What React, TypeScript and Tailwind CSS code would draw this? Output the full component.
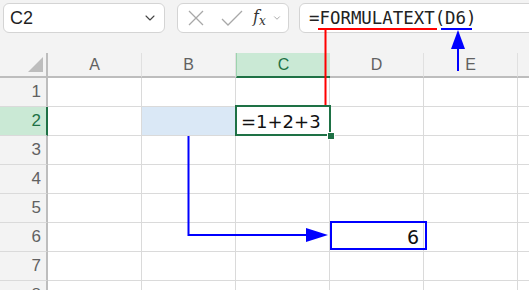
import { ChevronDown } from "lucide-react";

const cols = ["A", "B", "C", "D", "E", ""];
const rows = [1, 2, 3, 4, 5, 6, 7, 8];

function cellContent(col: string, row: number) {
  if (col === "C" && row === 2) {
    return <span className="pl-[5px] text-[18px] text-[#111]">=1+2+3</span>;
  }
  if (col === "D" && row === 6) {
    return <span className="ml-auto pr-[4px] text-[19px] text-[#111]">6</span>;
  }
  return null;
}

export default function App() {
  return (
    <div className="relative w-[529px] h-[290px] overflow-hidden bg-[#f3f3f3] font-['Liberation_Sans',sans-serif]">
      {/* toolbar */}
      <div className="flex h-[53px] items-start pt-[3px] pl-[3px] gap-[12px]">
        <div className="flex h-[30px] w-[162px] shrink-0 items-center rounded-[6px] border border-[#d4d4d4] bg-white pl-[6px] pr-[6px]">
          <span className="text-[18px] text-[#1f1f1f]">C2</span>
          <ChevronDown className="ml-auto text-[#444]" size={16} strokeWidth={1.6} />
        </div>
        <div className="flex h-[30px] w-[112px] shrink-0 items-center rounded-[6px] border border-[#d4d4d4] bg-white pl-[10px]">
          <svg width="16" height="16" viewBox="0 0 16 16" className="text-[#a8a8a8]">
            <path d="M1 1 L15 15 M15 1 L1 15" stroke="currentColor" strokeWidth="1.3" fill="none" />
          </svg>
          <svg width="22" height="16" viewBox="0 0 22 16" className="ml-[17px] text-[#a8a8a8]">
            <path d="M1 9 L7 15 L21 1" stroke="currentColor" strokeWidth="1.3" fill="none" />
          </svg>
          <span className="ml-[10px] font-['DejaVu_Serif',serif] italic text-[16px] text-[#333] leading-none">
            f<span className="text-[12px] align-[-3px]">x</span>
          </span>
          <ChevronDown className="ml-[6px] text-[#999]" size={10} strokeWidth={2} />
        </div>
        <div className="flex h-[30px] w-[260px] shrink-0 items-center rounded-[6px] border border-[#d4d4d4] bg-white pl-[9px] -ml-[2px]">
          <span className="font-['DejaVu_Sans_Mono',monospace] text-[17.4px] text-[#222]">=FORMULATEXT(D6)</span>
        </div>
      </div>

      {/* column headers */}
      <div className="flex h-[25px]">
        <div className="relative w-[48px] shrink-0 border-r-2 border-b-2 border-[#bdbdbd]">
          <svg width="16" height="16" viewBox="0 0 16 16" className="absolute right-[2px] bottom-[3px]">
            <polygon points="15,0 15,15 0,15" fill="#bdbdbd" />
          </svg>
        </div>
        {cols.map((c, i) =>
          c === "C" ? (
            <div
              key={i}
              className="flex w-[94px] shrink-0 items-center justify-center border-b-2 border-l border-[#1e7145] border-l-[#9dd3ae] bg-[#cae9d5] text-[16px] text-[#1e7145]"
            >
              {c}
            </div>
          ) : (
            <div
              key={i}
              className="flex w-[94px] shrink-0 items-center justify-center border-b-2 border-r border-[#bdbdbd] border-r-[#e0e0e0] text-[16px] text-[#616161]"
            >
              {c}
            </div>
          )
        )}
      </div>

      {/* rows */}
      {rows.map((r) => (
        <div key={r} className="flex h-[29px]">
          <div
            className={
              r === 2
                ? "flex w-[48px] shrink-0 items-center justify-end border-r-2 border-b border-[#1e7145] border-b-[#dadada] bg-[#cae9d5] pr-[5px] text-[17px] text-[#1e7145]"
                : "flex w-[48px] shrink-0 items-center justify-end border-r-2 border-b border-[#bdbdbd] border-b-[#dadada] pr-[5px] text-[17px] text-[#616161]"
            }
          >
            {r}
          </div>
          {cols.map((c, i) => (
            <div
              key={i}
              className={
                "flex w-[94px] shrink-0 items-center border-r border-b border-[#dadada] font-['DejaVu_Sans',sans-serif] " +
                (c === "B" && r === 2 ? "bg-[#dae8f6]" : "bg-white")
              }
            >
              {cellContent(c, r)}
            </div>
          ))}
        </div>
      ))}

      {/* active cell C2 */}
      <div className="absolute left-[235px] top-[105px] h-[31px] w-[96px] border-2 border-[#1e7145]" />
      <div className="absolute left-[328px] top-[133px] h-[6px] w-[6px] bg-[#1e7145] outline outline-1 outline-white" />

      {/* referenced cell D6 */}
      <div className="absolute left-[330px] top-[221px] h-[29px] w-[97px] border-2 border-[#0000ff]" />

      {/* annotation arrows */}
      <svg className="pointer-events-none absolute left-0 top-0" width="529" height="290" viewBox="0 0 529 290">
        <path d="M318 29 H437 M325.5 29 V105" stroke="#ff0000" strokeWidth="2" fill="none" />
        <path d="M441 29 H472" stroke="#0000ff" strokeWidth="2" fill="none" />
        <path d="M458 71 V46" stroke="#0000ff" strokeWidth="2" fill="none" />
        <polygon points="458,30 451,49 465,49" fill="#0000ff" />
        <path d="M188.5 136 V235 H308" stroke="#0000ff" strokeWidth="2" fill="none" />
        <polygon points="306,228 328,235 306,242" fill="#0000ff" />
      </svg>
    </div>
  );
}
